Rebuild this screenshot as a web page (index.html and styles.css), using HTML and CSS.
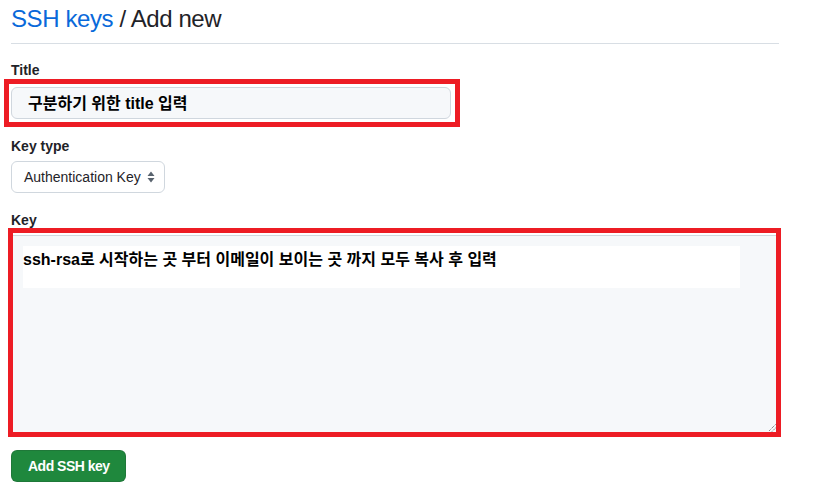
FILE: index.html
```html
<!DOCTYPE html>
<html lang="ko">
<head>
<meta charset="utf-8">
<title>SSH keys / Add new</title>
<link rel="stylesheet" href="styles.css">
</head>
<body>
<div class="page">
  <div class="subhead">
    <h1 class="subhead-heading"><a class="crumb" href="#">SSH keys</a> / Add new</h1>
  </div>
  <form class="form">
    <label class="label label-title">Title</label>
    <div class="mark mark-title">
      <div class="input">구분하기 위한 title 입력</div>
    </div>
    <label class="label label-type">Key type</label>
    <div class="select">
      <span>Authentication Key</span>
      <svg class="select-arrow" width="8" height="12" viewBox="0 0 8 12"><path d="M4 0.5 L7.5 5 H0.5 Z M0.5 7 H7.5 L4 11.5 Z" fill="#59636e"/></svg>
    </div>
    <label class="label label-key">Key</label>
    <div class="mark mark-key">
      <div class="textarea">
        <div class="paste">ssh-rsa로 시작하는 곳 부터 이메일이 보이는 곳 까지 모두 복사 후 입력</div>
        <svg class="resize" width="9" height="9" viewBox="0 0 9 9"><path d="M8.5 1.5 L1.5 8.5 M8.5 5 L5 8.5" stroke="#555" stroke-width="1" stroke-dasharray="1 1"/></svg>
      </div>
    </div>
    <button class="btn" type="button">Add SSH key</button>
  </form>
</div>
</body>
</html>
```

FILE: styles.css
```css
html, body {
  margin: 0;
  padding: 0;
  background: #ffffff;
}
body {
  font-family: "Liberation Sans", "Noto Sans CJK KR", sans-serif;
  color: #1f2328;
}
.page {
  width: 768px;
  padding: 3px 0 0 11px;
}
.subhead {
  border-bottom: 1px solid #d8dee4;
  padding-bottom: 8px;
}
.subhead-heading {
  margin: 0;
  font-size: 24px;
  font-weight: 400;
  line-height: 32px;
  letter-spacing: -0.4px;
  color: #1f2328;
}
.crumb {
  color: #0969da;
  text-decoration: none;
}
.form {
  display: flex;
  flex-direction: column;
  align-items: flex-start;
}
.label {
  display: block;
  font-size: 14px;
  font-weight: 700;
  line-height: 17px;
  color: #1f2328;
}
.label-title { margin-top: 18px; }
.label-type { margin-top: 11px; }
.label-key { margin-top: 19px; }
.mark {
  box-sizing: border-box;
  border: 5px solid #ed1c24;
}
.mark-title {
  width: 456px;
  margin-left: -7px;
  padding: 3px 4px 3px 2px;
}
.input {
  box-sizing: border-box;
  height: 32px;
  border: 1px solid #d0d7de;
  border-radius: 6px;
  background: #f6f8fa;
  padding: 0 0 3px 16px;
  display: flex;
  align-items: center;
  font-size: 16px;
  font-weight: 700;
  color: #000;
}
.select {
  box-sizing: border-box;
  margin-top: 6px;
  width: 154px;
  height: 32px;
  border: 1px solid #d0d7de;
  border-radius: 6px;
  background: #ffffff;
  padding: 0 9px 0 12px;
  display: flex;
  align-items: center;
  justify-content: space-between;
  font-size: 14px;
  color: #1f2328;
}
.mark-key {
  width: 773px;
  height: 209px;
  margin-top: -1px;
  margin-left: -3px;
  padding-top: 2px;
  display: flex;
  flex-direction: column;
}
.textarea {
  position: relative;
  flex: 1;
  border-top: 1px solid #d0d7de;
  background: #f6f8fa;
  padding: 10px 0 0 10px;
}
.paste {
  box-sizing: border-box;
  width: 717px;
  height: 42px;
  background: #ffffff;
  padding-top: 4px;
  font-size: 16px;
  font-weight: 700;
  line-height: 20px;
  color: #000;
}
.resize {
  position: absolute;
  right: 0;
  bottom: 0;
}
.btn {
  box-sizing: border-box;
  margin-top: 13px;
  width: 115px;
  height: 32px;
  padding: 0 16px;
  border: 1px solid rgba(31, 35, 40, 0.15);
  border-radius: 6px;
  background: #1f883d;
  color: #ffffff;
  font-family: "Liberation Sans", sans-serif;
  font-size: 14px;
  font-weight: 700;
  letter-spacing: -0.5px;
  line-height: 30px;
  white-space: nowrap;
}
```
